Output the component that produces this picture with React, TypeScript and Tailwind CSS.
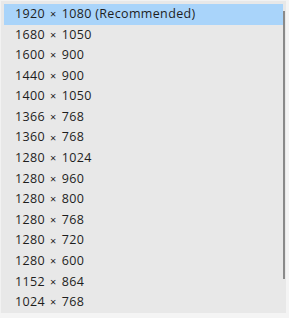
import React from 'react';

const resolutions = [
    '1920 × 1080 (Recommended)',
    '1680 × 1050',
    '1600 × 900',
    '1440 × 900',
    '1400 × 1050',
    '1366 × 768',
    '1360 × 768',
    '1280 × 1024',
    '1280 × 960',
    '1280 × 800',
    '1280 × 768',
    '1280 × 720',
    '1280 × 600',
    '1152 × 864',
    '1024 × 768',
];

const App: React.FC = () => {
    return (
        <div className="w-[289px] h-[318px] bg-[#f4f4f4] flex" style={{ fontFamily: '"Open Sans", "Noto Sans", sans-serif' }}>
            <div className="w-[286px] h-[313px] pl-[3px] pt-[3px] bg-[#e8e8e8] border-l border-t border-[#f2f2f2] flex">
                <ul className="flex-1 flex flex-col">
                    {resolutions.map((r, i) => {
                        const [w, rest] = r.split(' × ');
                        return (
                            <li
                                key={r}
                                className={`h-[20.6px] flex items-center pl-[11px] text-[12.5px] tracking-[0.35px] text-[#1e1e1e] ${i === 0 ? 'bg-[#a9d4fa]' : ''}`}
                            >
                                {w}
                                <span className="mx-[5px] text-[11px]">×</span>
                                {rest}
                            </li>
                        );
                    })}
                </ul>
                <div className="w-[3px] pt-[7px] flex flex-col">
                    <div className="w-[2px] h-[268px] bg-[#8a8a8a]" />
                </div>
            </div>
        </div>
    );
};

export default App;
